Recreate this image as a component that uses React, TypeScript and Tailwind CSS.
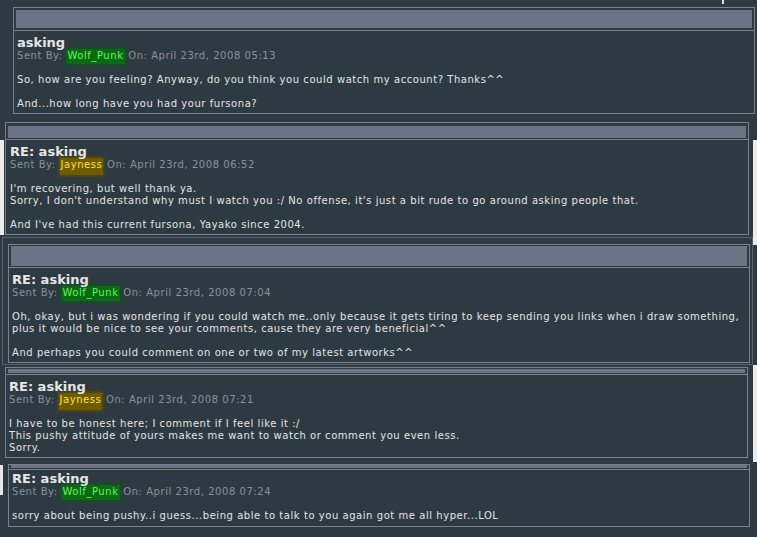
import React from "react";

type Msg = {
  title: string;
  sender: string;
  kind: "green" | "yellow";
  date: string;
  lines: string[];
};

function Badge({ name, kind }: { name: string; kind: "green" | "yellow" }) {
  if (kind === "green") {
    return (
      <span className="bg-[#0b6a13] text-[#62f55a] px-[1px] pt-[1px] pb-[3px] shadow-[0_0_3px_1px_#0b5a12]">
        {name}
      </span>
    );
  }
  return (
    <span className="bg-[#6e5b00] text-[#ffe040] px-[1px] pt-[1px] pb-[5px] shadow-[0_0_3px_1px_#5e4d00]">
      {name}
    </span>
  );
}

function Content({ m, pt, pb, pl }: { m: Msg; pt: string; pb: string; pl: string }) {
  return (
    <div className={`border-t border-[#77828c] ${pt} ${pb} ${pl}`}>
      <div className="relative z-10 text-[13px] leading-[14px] font-bold text-[#e6e6e6]">{m.title}</div>
      <div className="text-[10px] leading-[12px] tracking-[0.55px] text-[#87929a] whitespace-nowrap">
        Sent By: <Badge name={m.sender} kind={m.kind} /> On: {m.date}
      </div>
      <div className="h-[12px]" />
      {m.lines.map((l, i) =>
        l === "" ? (
          <div key={i} className="h-[12px]" />
        ) : (
          <div key={i} className="text-[10px] leading-[12px] tracking-[0.55px] text-[#e2e4e6] whitespace-nowrap">
            {l}
          </div>
        )
      )}
    </div>
  );
}

const msgs: Msg[] = [
  {
    title: "asking",
    sender: "Wolf_Punk",
    kind: "green",
    date: "April 23rd, 2008 05:13",
    lines: [
      "So, how are you feeling? Anyway, do you think you could watch my account? Thanks^^",
      "",
      "And...how long have you had your fursona?",
    ],
  },
  {
    title: "RE: asking",
    sender: "Jayness",
    kind: "yellow",
    date: "April 23rd, 2008 06:52",
    lines: [
      "I'm recovering, but well thank ya.",
      "Sorry, I don't understand why must I watch you :/ No offense, it's just a bit rude to go around asking people that.",
      "",
      "And I've had this current fursona, Yayako since 2004.",
    ],
  },
  {
    title: "RE: asking",
    sender: "Wolf_Punk",
    kind: "green",
    date: "April 23rd, 2008 07:04",
    lines: [
      "Oh, okay, but i was wondering if you could watch me..only because it gets tiring to keep sending you links when i draw something,",
      "plus it would be nice to see your comments, cause they are very beneficial^^",
      "",
      "And perhaps you could comment on one or two of my latest artworks^^",
    ],
  },
  {
    title: "RE: asking",
    sender: "Jayness",
    kind: "yellow",
    date: "April 23rd, 2008 07:21",
    lines: [
      "I have to be honest here; I comment if I feel like it :/",
      "This pushy attitude of yours makes me want to watch or comment you even less.",
      "Sorry.",
    ],
  },
  {
    title: "RE: asking",
    sender: "Wolf_Punk",
    kind: "green",
    date: "April 23rd, 2008 07:24",
    lines: ["sorry about being pushy..i guess...being able to talk to you again got me all hyper...LOL"],
  },
];

export default function App() {
  return (
    <div className="relative w-[757px] h-[537px] overflow-hidden bg-[#2e3a42] font-['DejaVu_Sans',Verdana,sans-serif]">
      {/* top-right artifact */}
      <div className="absolute left-[722px] top-0 w-[2px] h-[4px] bg-[#e0e0e0]" />

      {/* Row 1 */}
      <div className="flex items-start">
        <div className="w-[13px] shrink-0" />
        <div className="mt-[7px] w-[742px] border border-[#77828c]">
          <div className="pt-[2px] pb-[2px] px-[2px]">
            <div className="h-[18px] bg-[#6b7385]" />
          </div>
          <Content m={msgs[0]} pt="pt-[5px]" pb="pb-[3px]" pl="pl-[3px]" />
        </div>
      </div>

      {/* Row 2 */}
      <div className="flex items-start">
        <div className="w-[5px] shrink-0">
          <div className="mt-[26px] h-[95px] w-[4px] bg-[#ececec]" />
        </div>
        <div className="mt-[8px] w-[744px] border border-[#77828c]">
          <div className="pt-[3px] pb-[1px] px-[2px]">
            <div className="h-[12px] bg-[#6b7385]" />
          </div>
          <Content m={msgs[1]} pt="pt-[5px]" pb="pb-[3px]" pl="pl-[4px]" />
        </div>
        <div className="flex-1 flex justify-end">
          <div className="mt-[26px] h-[95px] w-[4px] bg-[#ececec]" />
        </div>
      </div>

      {/* Row 3 */}
      <div className="flex items-start">
        <div className="w-[2px] shrink-0" />
        <div className="mt-[2px] w-[751px] border border-[#55616a] pt-[6px] pb-[1px]">
          <div className="ml-[5px] w-[742px] border border-[#77828c]">
            <div className="pt-[1px] pb-[1px] px-[2px]">
              <div className="h-[20px] bg-[#6b7385]" />
            </div>
            <Content m={msgs[2]} pt="pt-[5px]" pb="pb-[3px]" pl="pl-[3px]" />
          </div>
        </div>
        <div className="flex-1 flex justify-end">
          <div className="h-[10px] w-[4px] bg-[#ececec]" />
        </div>
      </div>

      {/* Row 4 */}
      <div className="flex items-start">
        <div className="w-[5px] shrink-0" />
        <div className="mt-[2px] w-[743px] border border-[#77828c]">
          <div className="pt-[1px] pb-[1px] px-[2px]">
            <div className="h-[4px] bg-[#6b7385]" />
          </div>
          <Content m={msgs[3]} pt="pt-[5px]" pb="pb-[3px]" pl="pl-[3px]" />
        </div>
        <div className="flex-1 flex justify-end">
          <div className="h-[97px] w-[4px] bg-[#ececec]" />
        </div>
      </div>

      {/* Row 5 */}
      <div className="flex items-start">
        <div className="w-[8px] shrink-0">
          <div className="mt-[3px] h-[30px] w-[3px] bg-[#e6e6e6]" />
        </div>
        <div className="mt-[2px] w-[742px] border border-[#77828c]">
          <div className="pt-0 pb-[1px] px-[2px]">
            <div className="h-[3px] bg-[#6b7385]" />
          </div>
          <Content m={msgs[4]} pt="pt-[2px]" pb="pb-[4px]" pl="pl-[3px]" />
        </div>
      </div>
    </div>
  );
}
